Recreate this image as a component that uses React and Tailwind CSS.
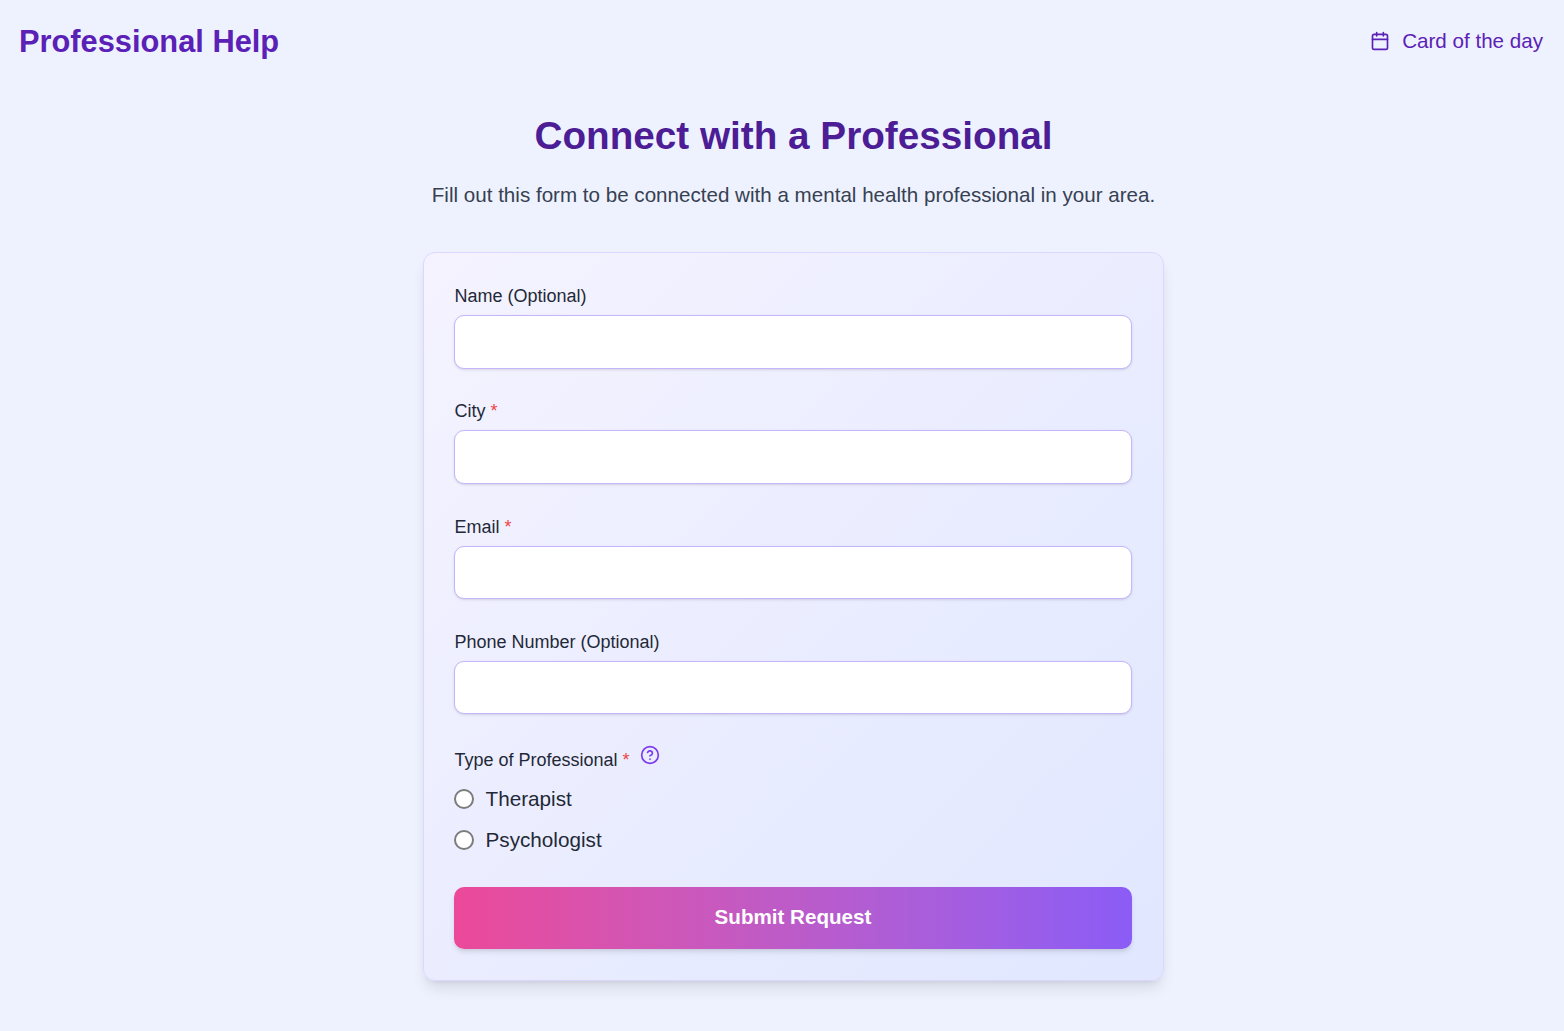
import React from 'react';
import { Calendar, CircleHelp } from 'lucide-react';

const inputClass = 'block w-full h-[53.4px] rounded-[10px] border border-[#c4b5fd] bg-white px-3 shadow-sm outline-none';

function Field({ label, required, id }) {
  return (
    <div className="mb-[24.8px]">
      <label htmlFor={id} className="block h-[37px] pt-[6px] pl-[0.5px] text-[18px] leading-[24px] text-[#1f2937]">
        <span>{label}</span>
        {required && <span className="ml-[5px] text-[#ef4444]">*</span>}
      </label>
      <input id={id} type="text" className={inputClass} />
    </div>
  );
}

function Radio({ label }) {
  return (
    <label className="flex items-center h-[41px] gap-[11.5px] text-[20.7px] text-[#1f2937]">
      <input type="radio" name="type" className="appearance-none w-[20px] h-[20px] rounded-full border-2 border-[#7c7c7c] bg-white" />
      <span className="-mt-[2px]">{label}</span>
    </label>
  );
}

export default function App() {
  return (
    <div className="min-h-[1031px] bg-[#eef2ff] font-['Liberation_Sans',Arial,sans-serif]">
      {/* Header */}
      <div className="flex justify-between items-center h-[82px] pl-[19px] pr-[21px]">
        <h1 className="mt-[2px] text-[30.8px] font-bold text-[#5b21b6]">Professional Help</h1>
        <button className="flex items-center gap-[12px] text-[20.6px] text-[#5b21b6]">
          <Calendar size={20} strokeWidth={2} />
          Card of the day
        </button>
      </div>

      {/* Body */}
      <div className="flex flex-col items-center pl-[23px]">
        <h2 className="mt-[26px] text-[38.7px] leading-[56px] font-bold text-[#4c1d95]">Connect with a Professional</h2>
        <p className="mt-[17px] text-[20.6px] leading-[28px] text-[#374151]">Fill out this form to be connected with a mental health professional in your area.</p>

        <form className="mt-[43px] w-[741px] rounded-[12px] border border-[#ddd6fe] bg-gradient-to-br from-[#f5f3ff] to-[#e0e7ff] pl-[30px] pr-[31px] pt-[25.2px] pb-[31px] shadow-lg">
          <Field id="name" label="Name (Optional)" />
          <Field id="city" label="City" required />
          <Field id="email" label="Email" required />
          <Field id="phone" label="Phone Number (Optional)" />

          <div className="flex items-center h-[32px] mt-[28.8px] pl-[0.5px] text-[18px] text-[#1f2937]">
            <span className="mt-[4px]">Type of Professional</span>
            <span className="mt-[4px] ml-[5px] text-[#ef4444]">*</span>
            <CircleHelp size={20} strokeWidth={2} className="ml-[10px] -mt-[8px] text-[#7c3aed]" />
          </div>
          <div className="mt-[4px]">
            <Radio label="Therapist" />
            <Radio label="Psychologist" />
          </div>

          <button type="button" className="mt-[26px] block w-full h-[62px] rounded-[10px] bg-gradient-to-r from-[#ec4899] to-[#8b5cf6] text-[20.6px] font-bold text-white shadow-md">
            Submit Request
          </button>
        </form>
      </div>
    </div>
  );
}
